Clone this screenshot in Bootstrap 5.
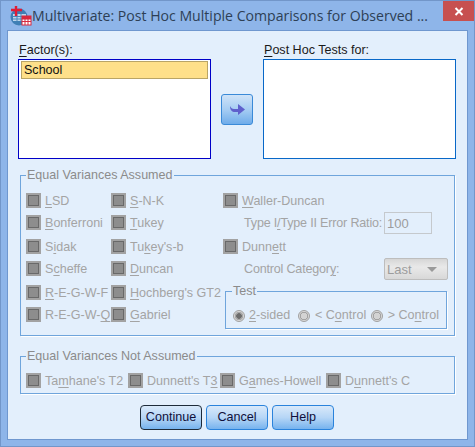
<!DOCTYPE html>
<html lang="en">
<head>
<meta charset="utf-8">
<title>Multivariate: Post Hoc</title>
<link rel="stylesheet" href="https://cdn.jsdelivr.net/npm/bootstrap@5.3.0/dist/css/bootstrap.min.css">
<style>
html,body{margin:0;height:447px;overflow:hidden}
body{background:#8eb5e9;font:12.55px/15px "Liberation Sans",Arial,sans-serif;color:#111;width:475px}
u{text-underline-offset:2px;text-decoration-thickness:1px}
.frame-edge{height:447px;border:1px solid #7296c9;display:flex;flex-direction:column}
.title-row{height:29px;display:flex;align-items:flex-start;padding-left:9px}
.title-icon{margin-top:5px;flex:none}
.title-text{font:14.1px/20px "Open Sans","Noto Sans",sans-serif;color:#2d3f55;margin:5px 0 0 0;white-space:nowrap;width:403px}
.close-x{width:31px;height:20px;margin-left:8px;background:#c75050;color:#fff;display:flex;align-items:center;justify-content:center;flex:none}
.client{margin:0 6px 0 6px;width:461px;height:410px;background:#e3effc;border:1px solid #6f97cf;box-sizing:border-box}
.top-area{padding:12px 0 0 10px;gap:10px}
.list-col{width:193px}
.list-label{height:16px;padding-left:1px;color:#1a1a1a}
.list-box{height:100px;background:#fff;border:1px solid #0000c8;padding:1px 2px}
.list-box.idle{border-color:#0868c8}
.picked{height:18px;background:#fee08a;border:1px solid #b9a566;padding-left:2px;line-height:16px;color:#111}
.arrow-wrap{padding-top:51px;width:32px}
.arrow-btn{width:32px;height:31px;padding:0;border:1px solid #3a8ad8;border-radius:3px;background:linear-gradient(#cfe3f8,#a6cdf3 50%,#6facea);display:flex;align-items:center;justify-content:center}
fieldset.grp{border:1px solid #6fa5dc;box-sizing:border-box;min-width:0;margin:0;box-shadow:1px 1px 0 #fff}
fieldset.grp legend{float:none;width:auto;margin:0;padding:0 1px;font-size:12.55px;line-height:15px;color:#8b8b8b}
.grp-main{margin:9px 0 0 12px!important;width:435px;height:168px;padding:10px 5px 0}
.grp-other{margin:13px 0 0 12px!important;width:435px;height:45px;padding:9px 5px 0}
.check-grid{display:grid;grid-template-columns:85px 112px 1fr;grid-template-rows:22px 24px 22px 24px 22px 22px}
.item{display:flex;align-items:flex-start;gap:4px;color:#a4a4a4;white-space:nowrap}
.item span{line-height:17px}
.form-check-input.cb{appearance:none;flex:none;width:15px;height:15px;margin:0;opacity:1;border-radius:0;border:2px solid #a2a2a2;background:#8d8d8d;box-shadow:inset 0 0 0 1px #696969}
.sub-row{display:flex;align-items:flex-start;padding-left:21px;color:#a4a4a4;white-space:nowrap}
.sub-label{width:140px;line-height:17px;letter-spacing:-.18px}
.form-control.ratio{width:48px;height:22px;margin-top:-3px;padding:0 0 0 2px;border:1px solid #c5c9cd;border-radius:0;background:#e3effc;font-size:13px;line-height:20px;color:#9c9c9c;opacity:1}
.combo-box{width:64px;height:22px;margin-top:-3px;border:1px solid #bdbdbd;border-radius:2px;background:linear-gradient(#d6d6d6,#e9e9e9 40%,#d8d8d8);display:flex;align-items:center;justify-content:space-between;padding:0 10px 0 2px;color:#9c9c9c;font-size:13px}
.combo-tip{width:0;height:0;border:5px solid transparent;border-top:5px solid #9a9a9a;border-bottom:0}
.test-slot{grid-column:3;grid-row:5 / span 2;padding-left:2px;margin-top:-1px}
fieldset.test-grp{width:222px;height:45px;padding:9px 7px 0}
fieldset.test-grp legend{margin-left:-1px}
.radio-row{display:flex;color:#a4a4a4;white-space:nowrap}
.radio-item{display:flex;align-items:center;gap:5px}
.radio-item.first-radio{gap:4px;width:66px}
.radio-item.second-radio{width:74px}
.form-check-input.rd{appearance:none;flex:none;width:12px;height:12px;margin:0;opacity:1;border-radius:50%;border:1px solid #a0a0a0;background:radial-gradient(circle,#d3d3d3 0 3px,#a3a3a3 3.5px 4px,#d9d9d9 4.5px)}
.form-check-input.rd:checked{background:radial-gradient(circle,#6d6d6d 0 2.5px,#a8a8a8 3px 4px,#d9d9d9 4.5px)}
.other-row{display:grid;grid-template-columns:102px 92px 106px 1fr}
.footer-row{margin-top:11px;margin-left:-1px;gap:4px}
.btn.act{width:62px;height:25px;padding:0;font-size:12.6px;line-height:21px;color:#10103a;border:1px solid #2a83dc;border-radius:4px;background:linear-gradient(#d9e9fa,#b6d6f6 50%,#77b3ee)}
.btn.act.main-act{border-color:#1d2b3a}
</style>
</head>
<body>
<div class="frame-edge">
  <div class="title-row">
    <svg class="title-icon" width="22" height="20" viewBox="0 0 22 20">
      <circle cx="9" cy="11" r="8.5" fill="#3f7fb5"/>
      <path d="M3 8h13v7H3z" fill="#bcd6ec"/>
      <path d="M3 10.500h13M3 13h13M7 8v7M11 8v7" stroke="#4b86b8" stroke-width="1"/>
      <path d="M6 0v10M1 4h11" stroke="#e01b35" stroke-width="2.4" fill="none"/>
      <rect x="12" y="10" width="9" height="9" fill="#fff" stroke="#d8283f"/>
      <path d="M12 12h9v1.400h-9zM12 15h9v1h-9zM14.500 12h1v7h-1zM17.500 12h1v7h-1z" fill="#d8283f"/>
      <rect x="12" y="10" width="9" height="2.400" fill="#d8283f"/>
    </svg>
    <div class="title-text">Multivariate: Post Hoc Multiple Comparisons for Observed ...</div>
    <div class="close-x"><svg width="10" height="9" viewBox="0 0 10 9"><path d="M1.500 1l7 7M8.500 1l-7 7" stroke="#fff" stroke-width="2"/></svg></div>
  </div>
  <div class="client">
    <div class="d-flex top-area">
      <div class="list-col">
        <div class="list-label"><u>F</u>actor(s):</div>
        <div class="list-box"><div class="picked">School</div></div>
      </div>
      <div class="arrow-wrap">
        <button type="button" class="btn arrow-btn" aria-label="Move">
          <svg width="15" height="13" viewBox="0 0 15 13"><path d="M0 3c1 2 2 3 4 3h4V1l7 5.500-7 5.500V9H5C2 9 0 7 0 3z" fill="#5f60cc"/></svg>
        </button>
      </div>
      <div class="list-col">
        <div class="list-label"><u>P</u>ost Hoc Tests for:</div>
        <div class="list-box idle"></div>
      </div>
    </div>

    <fieldset class="grp grp-main" disabled>
      <legend>Equal Variances Assumed</legend>
      <div class="check-grid">
        <label class="item"><input class="form-check-input cb" type="checkbox" disabled><span><u>L</u>SD</span></label>
        <label class="item"><input class="form-check-input cb" type="checkbox" disabled><span><u>S</u>-N-K</span></label>
        <label class="item"><input class="form-check-input cb" type="checkbox" disabled><span><u>W</u>aller-Duncan</span></label>

        <label class="item"><input class="form-check-input cb" type="checkbox" disabled><span><u>B</u>onferroni</span></label>
        <label class="item"><input class="form-check-input cb" type="checkbox" disabled><span><u>T</u>ukey</span></label>
        <div class="sub-row"><span class="sub-label">Type I<u>/</u>Type II Error Ratio:</span><input class="form-control ratio" type="text" value="100" disabled></div>

        <label class="item"><input class="form-check-input cb" type="checkbox" disabled><span>S<u>i</u>dak</span></label>
        <label class="item"><input class="form-check-input cb" type="checkbox" disabled><span>Tu<u>k</u>ey's-b</span></label>
        <label class="item"><input class="form-check-input cb" type="checkbox" disabled><span>Dunn<u>e</u>tt</span></label>

        <label class="item"><input class="form-check-input cb" type="checkbox" disabled><span>S<u>c</u>heffe</span></label>
        <label class="item"><input class="form-check-input cb" type="checkbox" disabled><span><u>D</u>uncan</span></label>
        <div class="sub-row"><span class="sub-label">Control Categor<u>y</u>:</span><div class="combo-box"><span>Last</span><span class="combo-tip"></span></div></div>

        <label class="item"><input class="form-check-input cb" type="checkbox" disabled><span><u>R</u>-E-G-W-F</span></label>
        <label class="item"><input class="form-check-input cb" type="checkbox" disabled><span><u>H</u>ochberg's GT2</span></label>
        <div class="test-slot">
          <fieldset class="grp test-grp">
            <legend>Test</legend>
            <div class="radio-row">
              <label class="radio-item first-radio"><input class="form-check-input rd" type="radio" name="t" checked disabled><span><u>2</u>-sided</span></label>
              <label class="radio-item second-radio"><input class="form-check-input rd" type="radio" name="t" disabled><span>&lt; C<u>o</u>ntrol</span></label>
              <label class="radio-item"><input class="form-check-input rd" type="radio" name="t" disabled><span>&gt; Co<u>n</u>trol</span></label>
            </div>
          </fieldset>
        </div>

        <label class="item"><input class="form-check-input cb" type="checkbox" disabled><span>R-E-G-W-<u>Q</u></span></label>
        <label class="item"><input class="form-check-input cb" type="checkbox" disabled><span><u>G</u>abriel</span></label>
      </div>
    </fieldset>

    <fieldset class="grp grp-other" disabled>
      <legend>Equal Variances Not Assumed</legend>
      <div class="other-row">
        <label class="item"><input class="form-check-input cb" type="checkbox" disabled><span>Ta<u>m</u>hane's T2</span></label>
        <label class="item"><input class="form-check-input cb" type="checkbox" disabled><span>Dunnett's T<u>3</u></span></label>
        <label class="item"><input class="form-check-input cb" type="checkbox" disabled><span>G<u>a</u>mes-Howell</span></label>
        <label class="item"><input class="form-check-input cb" type="checkbox" disabled><span>D<u>u</u>nnett's C</span></label>
      </div>
    </fieldset>

    <div class="d-flex justify-content-center footer-row">
      <button type="button" class="btn act main-act">Continue</button>
      <button type="button" class="btn act">Cancel</button>
      <button type="button" class="btn act">Help</button>
    </div>
  </div>
</div>
</body>
</html>
